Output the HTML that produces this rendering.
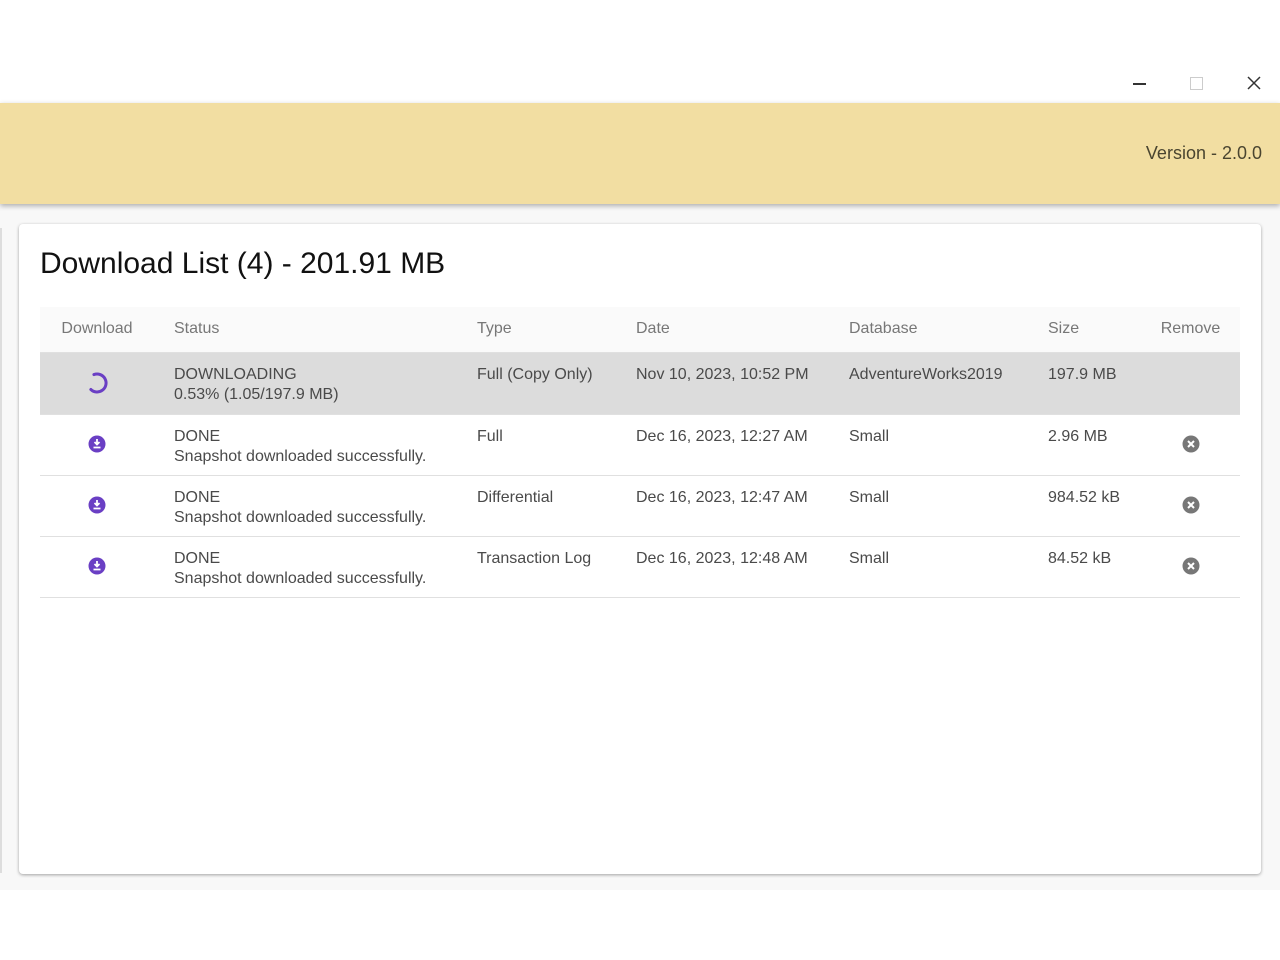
<!DOCTYPE html>
<html><head><style>
body{margin:0;width:1280px;height:960px;background:#fff;font-family:"Liberation Sans",sans-serif;position:relative;overflow:hidden}
.abs{position:absolute}
.hdr{left:0;top:103px;width:1280px;height:101px;background:#f2dea2;box-shadow:0 2px 5px rgba(0,0,0,.3);z-index:2}
.bg{left:0;top:204px;width:1280px;height:686px;background:#f8f8f8}
.card{left:19px;top:224px;width:1242px;height:650px;background:#fff;border-radius:4px;box-shadow:0 1px 3px rgba(0,0,0,.35)}
table{position:absolute;left:40px;top:307px;width:1200px;border-collapse:collapse;table-layout:fixed;font-size:16px;letter-spacing:0;color:#4a4a4a}
th{height:45px;box-sizing:border-box;background:#fafafa;color:#777;font-weight:normal;text-align:left;border-bottom:1px solid #e0e0e0;padding:0 0 0 20px}
td{vertical-align:top;padding:12px 0 0 20px;height:61px;box-sizing:border-box;border-bottom:1px solid #e0e0e0;line-height:20px;white-space:nowrap}
tr.g td{background:#dcdcdc;height:62px}
th.c,td.c{text-align:center;padding-left:0}
</style></head><body>
<div class="abs" style="left:1133px;top:83px;width:13px;height:1.5px;background:#333"></div>
<div class="abs" style="left:1190px;top:77px;width:11px;height:11px;border:1px solid #ccc"></div>
<svg class="abs" style="left:1247px;top:76px" width="14" height="14"><path d="M1 1L13 13M13 1L1 13" stroke="#333" stroke-width="1.5"/></svg>
<div class="abs hdr"><div class="abs" style="right:18px;top:40px;font-size:18px;color:#4a4530">Version - 2.0.0</div></div>
<div class="abs bg"></div>
<div class="abs" style="left:0;top:228px;width:2px;height:645px;background:#ddd"></div>
<div class="abs card"></div>
<div class="abs" style="left:40px;top:247px;font-size:30px;color:#111">Download List (4) - 201.91 MB</div>
<table>
<colgroup><col style="width:114px"><col style="width:303px"><col style="width:159px"><col style="width:213px"><col style="width:199px"><col style="width:113px"><col style="width:99px"></colgroup>
<tr><th class="c">Download</th><th>Status</th><th>Type</th><th>Date</th><th>Database</th><th>Size</th><th class="c">Remove</th></tr>
<tr class="g"><td class="c" style="padding-top:18px"><svg width="24" height="24" viewBox="0 0 24 24"><path d="M12 3A9 9 0 1 1 4 16" fill="none" stroke="#6a3fc4" stroke-width="3" stroke-linecap="round" transform="rotate(-20 12 12)"/></svg></td><td>DOWNLOADING<br>0.53% (1.05/197.9 MB)</td><td>Full (Copy Only)</td><td>Nov 10, 2023, 10:52 PM</td><td>AdventureWorks2019</td><td>197.9 MB</td><td></td></tr>
<tr><td class="c" style="padding-top:20px"><svg width="18" height="18" viewBox="0 0 18 18"><circle cx="9" cy="9" r="8.5" fill="#6a3fc4"/><path d="M9 4v5M6.5 7L9 9.5 11.5 7M5.5 12.5h7" stroke="#fff" stroke-width="1.8" fill="none"/></svg></td><td>DONE<br>Snapshot downloaded successfully.</td><td>Full</td><td>Dec 16, 2023, 12:27 AM</td><td>Small</td><td>2.96 MB</td><td class="c" style="padding-top:20px"><svg width="18" height="18" viewBox="0 0 18 18"><circle cx="9" cy="9" r="8.5" fill="#777"/><path d="M6 6l6 6M12 6l-6 6" stroke="#fff" stroke-width="2"/></svg></td></tr>
<tr><td class="c" style="padding-top:20px"><svg width="18" height="18" viewBox="0 0 18 18"><circle cx="9" cy="9" r="8.5" fill="#6a3fc4"/><path d="M9 4v5M6.5 7L9 9.5 11.5 7M5.5 12.5h7" stroke="#fff" stroke-width="1.8" fill="none"/></svg></td><td>DONE<br>Snapshot downloaded successfully.</td><td>Differential</td><td>Dec 16, 2023, 12:47 AM</td><td>Small</td><td>984.52 kB</td><td class="c" style="padding-top:20px"><svg width="18" height="18" viewBox="0 0 18 18"><circle cx="9" cy="9" r="8.5" fill="#777"/><path d="M6 6l6 6M12 6l-6 6" stroke="#fff" stroke-width="2"/></svg></td></tr>
<tr><td class="c" style="padding-top:20px"><svg width="18" height="18" viewBox="0 0 18 18"><circle cx="9" cy="9" r="8.5" fill="#6a3fc4"/><path d="M9 4v5M6.5 7L9 9.5 11.5 7M5.5 12.5h7" stroke="#fff" stroke-width="1.8" fill="none"/></svg></td><td>DONE<br>Snapshot downloaded successfully.</td><td>Transaction Log</td><td>Dec 16, 2023, 12:48 AM</td><td>Small</td><td>84.52 kB</td><td class="c" style="padding-top:20px"><svg width="18" height="18" viewBox="0 0 18 18"><circle cx="9" cy="9" r="8.5" fill="#777"/><path d="M6 6l6 6M12 6l-6 6" stroke="#fff" stroke-width="2"/></svg></td></tr>
</table>
</body></html>
